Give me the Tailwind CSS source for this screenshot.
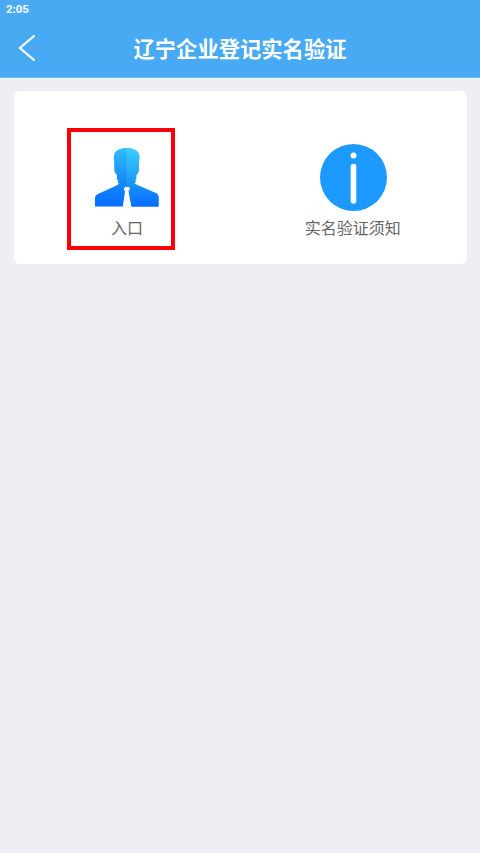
<!DOCTYPE html>
<html lang="zh-CN">
<head>
<meta charset="utf-8">
<meta name="viewport" content="width=device-width, initial-scale=1">
<title>辽宁企业登记实名验证</title>
<script src="https://cdn.jsdelivr.net/npm/@tailwindcss/browser@4"></script>
</head>
<body class="min-h-screen overflow-hidden bg-[#efeef4] font-['Noto_Sans_CJK_SC',sans-serif]">
<header class="h-[78px] border-b border-[#72bbf2] bg-[#48aaf2] text-white">
  <div class="flex h-5 items-center pl-1.5 font-[Roboto,sans-serif] text-[11.300px] font-bold">2:05</div>
  <div class="grid h-[56px] grid-cols-[60px_1fr_60px] items-center">
    <button class="pl-[18px]" aria-label="返回">
      <svg class="block" width="20" height="28" viewBox="0 0 20 28" fill="none" stroke="#fff" stroke-width="2.2"><path d="M16.500 1.500 2 14l14.500 12.500"/></svg>
    </button>
    <h1 class="pb-px text-center text-[21.300px] leading-8 font-bold whitespace-nowrap">辽宁企业登记实名验证</h1>
  </div>
</header>
<main class="px-[13.500px] pt-[13px]">
  <section class="grid h-[173px] grid-cols-2 rounded-md bg-white pt-[37px] text-[16px] leading-6 text-[#666]">
    <a class="ml-[53.500px] flex h-[121.500px] w-[108px] flex-col items-start border-4 border-[#fb0007] pt-4 pl-6">
      <svg width="64" height="59" viewBox="0 0 64 59">
        <defs>
          <linearGradient id="suit" x1="0" y1="0" x2="0" y2="59" gradientUnits="userSpaceOnUse"><stop offset="0" stop-color="#32bdfb"/><stop offset=".5" stop-color="#198ffa"/><stop offset="1" stop-color="#056bff"/></linearGradient>
          <linearGradient id="light" x1="0" y1="0" x2="0" y2="59" gradientUnits="userSpaceOnUse"><stop offset="0" stop-color="#3bd0ff"/><stop offset=".5" stop-color="#20a0ff"/><stop offset="1" stop-color="#056bff"/></linearGradient>
          <clipPath id="half"><path d="M31.500 0H64V59H31.500z"/></clipPath>
          <path id="bust" d="M31.500 0C26 0 22 1.500 20 4.500C18.500 7 18.700 11 19.200 14.500V21C19.200 23.500 20.300 25.500 22 27V31.500L23.300 32.500L22.500 34L24.200 35.200L21.500 37.500L4 45.500C1 46.800 0 48 0 50.500V58.500H27.800L30 43.500L28.700 41L30 38.700H34L35.200 41L33.700 43.500L36.500 58.500H63.500V49.500C63.500 47.500 63 46 60.500 45L42 37L39 35.200L40.800 34L40 32.500L41.200 31.500V27C42.900 25.500 44 23.500 44 21V14.500C44.500 11 44.700 7 43.200 4.500C41 1.500 37 0 31.500 0Z"/>
        </defs>
        <use href="#bust" fill="url(#suit)"/>
        <use href="#bust" fill="url(#light)" clip-path="url(#half)"/>
      </svg>
      <span class="mt-[8px] ml-4">入口</span>
    </a>
    <a class="flex flex-col items-center pt-4">
      <svg width="67" height="67" viewBox="0 0 67 67"><circle cx="33.500" cy="33.500" r="33.500" fill="#1d9aff"/><circle cx="33.500" cy="11.500" r="3" fill="#fff"/><path d="M33.500 22.500V57" stroke="#fff" stroke-width="5.600" stroke-linecap="round"/></svg>
      <span class="mt-1 mr-px">实名验证须知</span>
    </a>
  </section>
</main>
</body>
</html>
